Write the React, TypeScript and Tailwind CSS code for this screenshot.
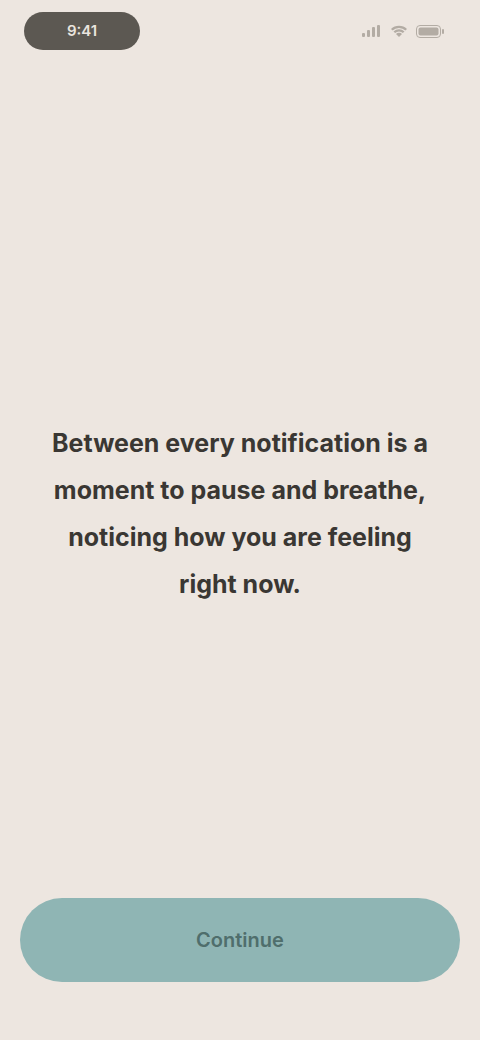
import React from "react"

export default function App() {
  return (
    <div className="flex h-[1040px] w-[480px] flex-col bg-[#ede6e0] font-['Inter',sans-serif] text-[#2f2c29]">
      <header className="flex items-center justify-between px-6 pt-3">
        <span className="flex h-[38px] w-[116px] items-center justify-center rounded-full bg-[#5c5852] text-[15px] font-semibold text-[#e9e4de]">
          9:41
        </span>
        <div className="flex items-center gap-2 pr-3 text-[#b3aca4]">
          <svg width="20" height="12" viewBox="0 0 20 12" fill="currentColor"><rect x="0" y="8" width="3" height="4" rx="1" /><rect x="5" y="5" width="3" height="7" rx="1" /><rect x="10" y="2" width="3" height="10" rx="1" /><rect x="15" y="0" width="3" height="12" rx="1" /></svg>
          <svg width="18" height="12" viewBox="0 0 18 12" fill="currentColor"><path d="M9 12l-3-3a4.2 4.2 0 0 1 6 0z" /><path d="M3.5 6.5a7.8 7.8 0 0 1 11 0l-1.6 1.6a5.5 5.5 0 0 0-7.8 0z" /><path d="M1 4a11.3 11.3 0 0 1 16 0l-1.6 1.6a9 9 0 0 0-12.8 0z" /></svg>
          <svg width="28" height="13" viewBox="0 0 28 13" fill="none"><rect x="0.5" y="0.5" width="24" height="12" rx="3.5" stroke="currentColor" /><rect x="2.5" y="2.5" width="20" height="8" rx="2" fill="currentColor" /><rect x="26" y="4" width="2" height="5" rx="1" fill="currentColor" /></svg>
        </div>
      </header>

      <main className="flex flex-1 items-center justify-center px-12 pt-[80px]">
        <p className="text-center text-[25px] font-bold leading-[47px] text-[#3a3733]">
          Between every notification is a moment to pause and breathe, noticing how you are feeling right now.
        </p>
      </main>

      <footer className="px-5 pb-[58px]">
        <button
          type="button"
          className="flex h-[84px] w-full items-center justify-center rounded-full bg-[#8fb5b4] text-[20px] font-semibold text-[#4f6e6c]"
        >
          Continue
        </button>
      </footer>
    </div>
  )
}
